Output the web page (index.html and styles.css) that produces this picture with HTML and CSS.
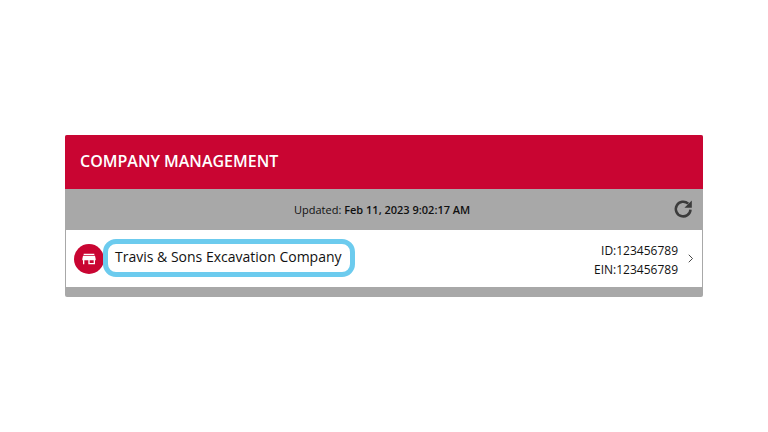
FILE: index.html
```html
<!DOCTYPE html>
<html lang="en">
<head>
  <meta charset="UTF-8">
  <title>Company Management</title>
  <link rel="stylesheet" href="styles.css">
</head>
<body>
  <div class="card">
    <div class="card-header">COMPANY MANAGEMENT</div>

    <!-- Updated bar -->
    <div class="updated-bar">
      <span class="updated-text">Updated: <b>Feb 11, 2023 9:02:17 AM</b></span>
      <svg class="refresh-icon" viewBox="0 0 24 24" width="22" height="22">
        <path d="M20.2 12.6a8 8 0 1 1-2.5-6.4" fill="none" stroke="#3c3c3c" stroke-width="2.8"/>
        <path d="M21.6 2.6v8h-8z" fill="#3c3c3c"/>
      </svg>
    </div>

    <!-- Company row -->
    <div class="company-row">
      <div class="company-icon">
        <svg viewBox="0 0 24 24" width="16" height="16">
          <path fill="#fff" d="M4 4h16v2H4zM3 7h18l1 5v2h-1v6H11v-6H5v6H3v-6H2v-2zM13 14v4h6v-4z"/>
        </svg>
      </div>
      <div class="company-name">Travis &amp; Sons Excavation Company</div>
      <div class="company-ids">
        <div>ID:123456789</div>
        <div>EIN:123456789</div>
      </div>
      <svg class="chevron" viewBox="0 0 8 12" width="6" height="9">
        <path d="M1 1l5 5-5 5" fill="none" stroke="#333" stroke-width="1.2"/>
      </svg>
    </div>
  </div>
</body>
</html>
```

FILE: styles.css
```css
body {
  margin: 0;
  padding: 135px 65px 0;
  background: #fff;
  font-family: "Open Sans", sans-serif;
  color: #111;
}

.card {
  width: 638px;
  height: 162px;
  background: #a8a8a8;
  border-radius: 2px;
  overflow: hidden;
}

.card-header {
  height: 51px;
  padding: 0 0 3px 15px;
  display: flex;
  align-items: center;
  background: #c90532;
  color: #fff;
  font-size: 16px;
  font-weight: 600;
}

.updated-bar {
  height: 41px;
  padding-right: 9px;
  display: flex;
  align-items: center;
  justify-content: flex-end;
  position: relative;
}

.updated-text {
  position: absolute;
  left: 229px;
  font-size: 11px;
}

.updated-text b {
  font-weight: 600;
}

.refresh-icon {
  margin-bottom: 2px;
}

.company-row {
  height: 57px;
  margin: 0 1px;
  padding: 0 8px;
  display: flex;
  align-items: center;
  background: #fff;
}

.company-icon {
  width: 30px;
  height: 30px;
  border-radius: 50%;
  background: #c90532;
  display: flex;
  align-items: center;
  justify-content: center;
  flex-shrink: 0;
}

.company-name {
  margin: 0 0 1px -1px;
  padding: 0 8px 2px 7px;
  height: 26px;
  line-height: 26px;
  border: 5px solid #6ccbee;
  border-radius: 13px;
  font-size: 14px;
}

.company-ids {
  margin: 2px 0 0 auto;
  text-align: right;
  font-size: 12px;
  line-height: 19px;
}

.chevron {
  margin-left: 10px;
}
```
